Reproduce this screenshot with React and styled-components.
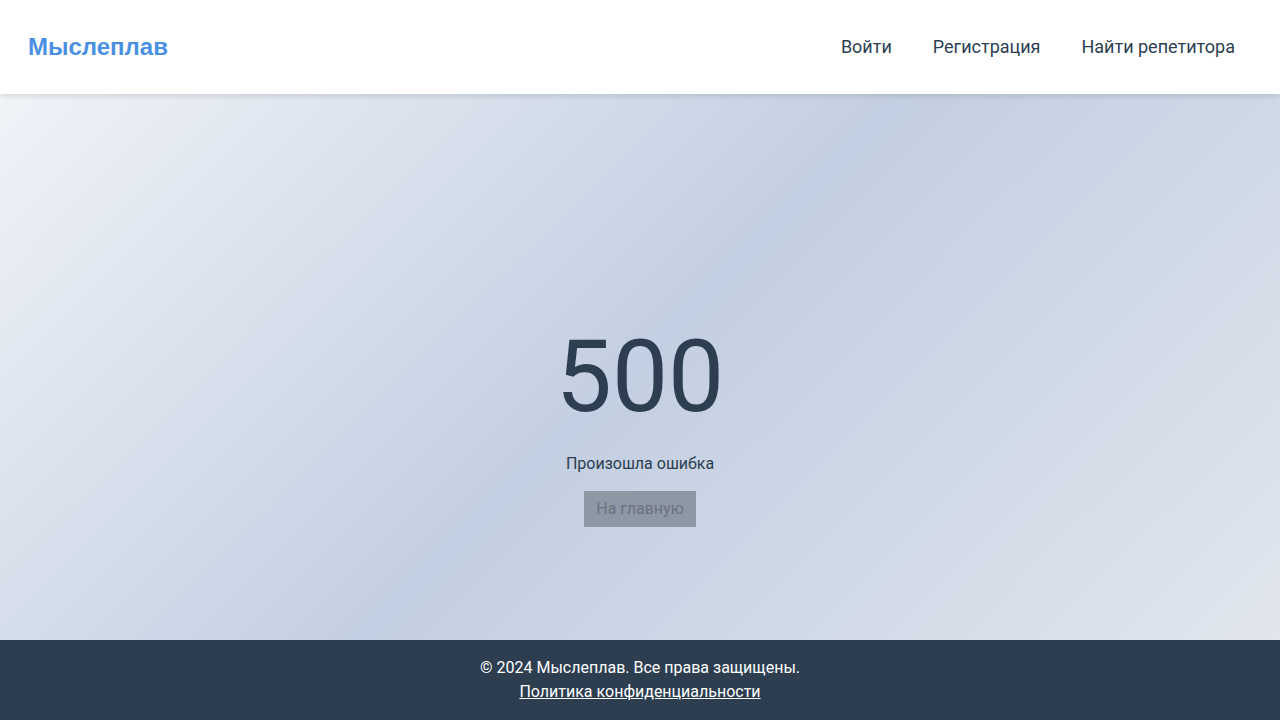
import React from 'react'
import styled, { createGlobalStyle } from 'styled-components'

const GlobalStyle = createGlobalStyle`
  html, body {
    margin: 0;
    padding: 0;
  }
  body {
    font-family: Roboto, "Noto Sans", sans-serif;
    color: #2c3e50;
    background: linear-gradient(135deg, #f5f7fa 0%, #c3cfe2 50%, #e4e8ef 100%);
    min-height: 100vh;
  }
`

const Page = styled.div`
  display: flex;
  flex-direction: column;
  min-height: 100vh;
`

const Header = styled.header`
  height: 94px;
  display: flex;
  align-items: center;
  justify-content: space-between;
  padding: 0 45px 2px 28px;
  box-sizing: border-box;
  background: #ffffff;
  box-shadow: 0 2px 6px rgba(0, 0, 0, 0.12);
  position: relative;
  z-index: 1;
`

const Logo = styled.a`
  font-family: "Liberation Sans", Arial, sans-serif;
  font-weight: 700;
  font-size: 24px;
  color: #4a90e2;
  text-decoration: none;
  margin-top: 2px;
`

const Nav = styled.nav`
  display: flex;
  gap: 41px;
`

const NavLink = styled.a`
  font-size: 18px;
  color: #2c3e50;
  text-decoration: none;
`

const Main = styled.main`
  flex: 1;
  display: flex;
  flex-direction: column;
  align-items: center;
  justify-content: center;
  text-align: center;
  padding-top: 110px;
`

const Code = styled.h1`
  margin: 0;
  font-size: 100px;
  font-weight: 400;
  line-height: 1.2;
  color: #2c3e50;
`

const Message = styled.p`
  margin: 15px 0 15px;
  font-size: 16px;
  line-height: 24px;
`

const HomeButton = styled.a`
  display: inline-block;
  padding: 6px 12px;
  font-size: 16px;
  line-height: 24px;
  background: #8e97a4;
  color: #6b7380;
  text-decoration: none;
`

const Footer = styled.footer`
  height: 80px;
  box-sizing: border-box;
  padding-top: 16px;
  background: #2c3e50;
  color: #ffffff;
  text-align: center;
  font-size: 16px;
  line-height: 24px;
`

const FooterLink = styled.a`
  color: #ffffff;
  text-decoration: underline;
`

export default function App() {
  return (
    <Page>
      <GlobalStyle />
      <Header>
        <Logo href="#">Мыслеплав</Logo>
        <Nav>
          <NavLink href="#">Войти</NavLink>
          <NavLink href="#">Регистрация</NavLink>
          <NavLink href="#">Найти репетитора</NavLink>
        </Nav>
      </Header>
      <Main>
        <Code>500</Code>
        <Message>Произошла ошибка</Message>
        <HomeButton href="#">На главную</HomeButton>
      </Main>
      <Footer>
        <div>© 2024 Мыслеплав. Все права защищены.</div>
        <FooterLink href="#">Политика конфиденциальности</FooterLink>
      </Footer>
    </Page>
  )
}
